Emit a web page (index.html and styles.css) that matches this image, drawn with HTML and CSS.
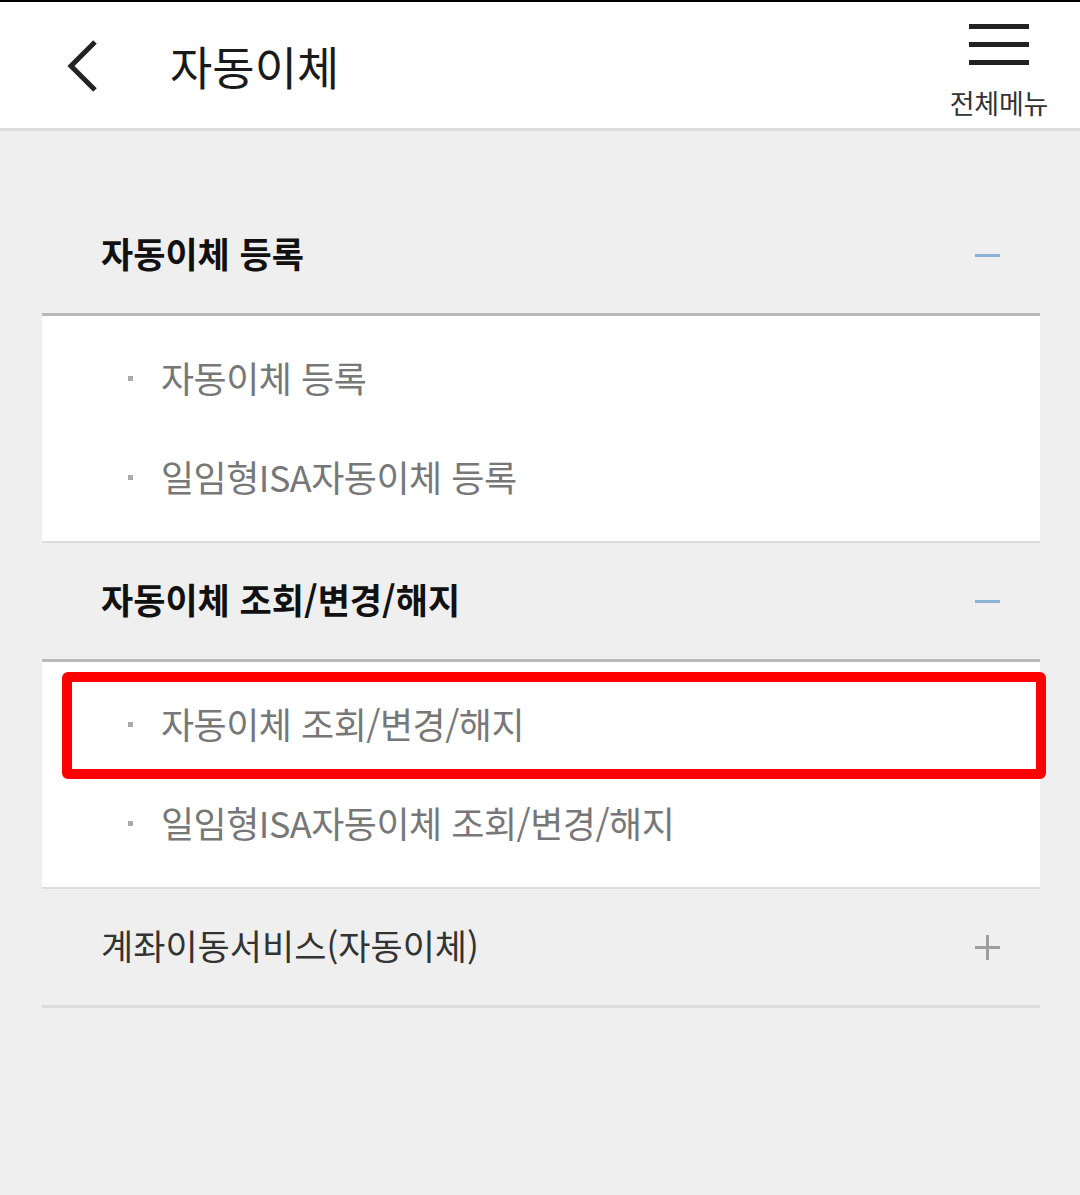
FILE: index.html
```html
<!DOCTYPE html>
<html lang="ko">
<head>
  <meta charset="UTF-8">
  <title>자동이체</title>
  <link rel="stylesheet" href="styles.css">
</head>
<body>

  <div class="top-bar">
    <div class="back-button">
      <svg width="34" height="54" viewBox="0 0 34 54">
        <path d="M29 3 L5 27 L29 51" fill="none" stroke="#222" stroke-width="5"/>
      </svg>
    </div>
    <div class="page-title">자동이체</div>
    <div class="all-menu">
      <div class="burger">
        <span></span><span></span><span></span>
      </div>
      <div class="all-menu-label">전체메뉴</div>
    </div>
  </div>

  <div class="menu-list">
    <div class="group open">
      <div class="group-head">
        <span class="group-title">자동이체 등록</span>
        <span class="toggle minus"></span>
      </div>
      <div class="group-items">
        <div class="item">자동이체 등록</div>
        <div class="item">일임형ISA자동이체 등록</div>
      </div>
    </div>

    <div class="group open">
      <div class="group-head">
        <span class="group-title">자동이체 조회/변경/해지</span>
        <span class="toggle minus"></span>
      </div>
      <div class="group-items">
        <div class="item highlight">자동이체 조회/변경/해지</div>
        <div class="item">일임형ISA자동이체 조회/변경/해지</div>
      </div>
    </div>

    <div class="group">
      <div class="group-head">
        <span class="group-title">계좌이동서비스(자동이체)</span>
        <span class="toggle plus"></span>
      </div>
    </div>
  </div>

</body>
</html>
```

FILE: styles.css
```css
    body {
      margin: 0;
      background: #efefef;
      font-family: 'Noto Sans CJK KR', 'Noto Sans', sans-serif;
      color: #222;
    }

    .top-bar {
      display: flex;
      align-items: center;
      height: 126px;
      background: #fff;
      border-top: 2px solid #000;
      border-bottom: 3px solid #dedede;
      padding: 0 32px 0 66px;
    }

    .back-button {
      display: flex;
      width: 34px;
      height: 54px;
      margin-top: 2px;
    }

    .page-title {
      margin-left: 70px;
      font-size: 46px;
      color: #1a1a1a;
      flex: 1;
      line-height: 1;
    }

    .all-menu {
      display: flex;
      flex-direction: column;
      align-items: center;
      align-self: flex-start;
      padding-top: 22px;
    }

    .burger {
      display: flex;
      flex-direction: column;
      gap: 13px;
      width: 60px;
    }

    .burger span {
      display: block;
      height: 5px;
      background: #222;
    }

    .all-menu-label {
      font-size: 27px;
      color: #333;
      letter-spacing: -0.3px;
      margin-top: 24px;
      line-height: 1;
    }

    .menu-list {
      margin: 0 40px 0 42px;
      padding-top: 66px;
    }

    .group-head {
      display: flex;
      align-items: center;
      justify-content: space-between;
      height: 116px;
      padding: 0 40px 0 59px;
      border-bottom: 3px solid #dcdcdc;
    }

    .group.open .group-head {
      border-bottom-color: #b9b9b9;
    }

    .group-title {
      font-size: 35px;
      color: #333;
      margin-top: -6px;
    }

    .group.open .group-title {
      font-weight: bold;
      color: #111;
    }

    .toggle {
      position: relative;
      width: 25px;
      height: 25px;
    }

    .toggle::before,
    .toggle::after {
      content: "";
      position: absolute;
      left: 0;
      top: 11px;
      width: 25px;
      height: 3px;
      background: #9d9d9d;
    }

    .toggle.minus::before {
      background: #8cb2d6;
    }

    .toggle.minus::after {
      display: none;
    }

    .toggle.plus::after {
      left: 11px;
      top: 0;
      width: 3px;
      height: 25px;
    }

    .group-items {
      background: #fff;
      padding: 13px 0 14px;
      border-bottom: 2px solid #dddddd;
    }

    .item {
      position: relative;
      display: flex;
      align-items: center;
      box-sizing: border-box;
      height: 99px;
      padding: 0 0 4px 119px;
      font-size: 36px;
      color: #777;
      letter-spacing: -0.5px;
    }

    .item::before {
      content: "";
      position: absolute;
      left: 86px;
      top: 47px;
      width: 5px;
      height: 5px;
      background: #aaa;
    }

    .item.highlight::after {
      content: "";
      position: absolute;
      left: 20px;
      right: -6px;
      top: -3px;
      bottom: -5px;
      border: 10px solid #ff0000;
      border-radius: 6px;
    }
```
